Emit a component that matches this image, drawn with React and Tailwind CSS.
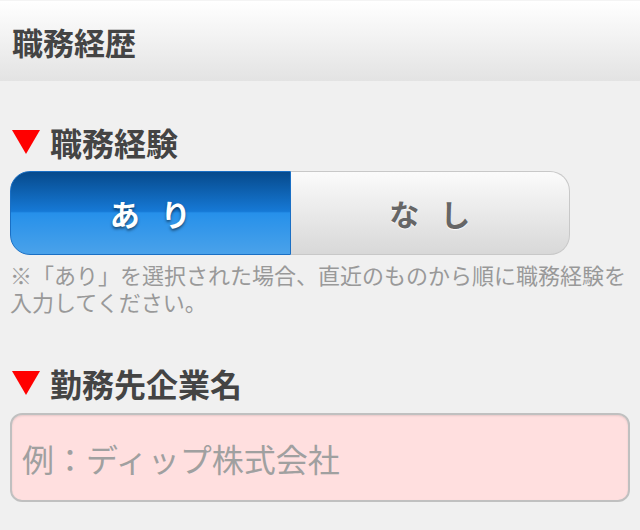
export default function App() {
  const jp = { fontFamily: '"Noto Sans CJK JP", "Noto Sans", sans-serif' };
  const Tri = () => (
    <svg width="28" height="24" viewBox="0 0 28 24" className="shrink-0">
      <polygon points="0,0 28,0 14,24" fill="#ff0000" />
    </svg>
  );
  return (
    <div className="w-[640px] h-[530px] overflow-hidden bg-[#f0f0f0]" style={jp}>
      <header className="h-[81px] border-t border-[#f4f4f4] bg-gradient-to-b from-[#ffffff] to-[#e3e3e3] flex items-center px-[12px]">
        <h1 className="text-[31px] font-bold text-[#444444] leading-none">職務経歴</h1>
      </header>

      <section className="px-[10px] pt-[45px]">
        <h2 className="flex items-center gap-[10px] h-[32px] text-[32px] font-bold text-[#444444] leading-none pl-[2px]">
          <Tri />
          職務経験
        </h2>

        <div className="mt-[13px] flex w-[560px] h-[84px]">
          <button className="flex-1 rounded-l-[20px] border border-[#1a6fc4] bg-[linear-gradient(to_bottom,#064a8c_0%,#1679d6_48%,#2690ea_50%,#4aa2ea_100%)] text-white text-[30px] font-bold tracking-[0.7em] pl-[0.7em] [text-shadow:0_2px_3px_rgba(0,0,0,0.5)]">
            あり
          </button>
          <button className="flex-1 rounded-r-[20px] border border-l-0 border-[#c8c8c8] bg-gradient-to-b from-[#fbfbfb] to-[#d8d8d8] text-[#666666] text-[30px] font-bold tracking-[0.7em] pl-[0.7em] [text-shadow:0_1px_1px_rgba(255,255,255,0.9)]">
            なし
          </button>
        </div>

        <p className="mt-[6px] text-[22px] leading-[27px] text-[#999999]">
          ※「あり」を選択された場合、直近のものから順に職務経験を入力してください。
        </p>
      </section>

      <section className="px-[10px] pt-[52px]">
        <h2 className="flex items-center gap-[10px] h-[32px] text-[32px] font-bold text-[#444444] leading-none pl-[2px]">
          <Tri />
          勤務先企業名
        </h2>
        <input
          className="mt-[14px] w-[620px] h-[89px] rounded-[12px] border-2 border-[#c0c0c0] bg-[#ffdfdf] px-[10px] text-[32px] text-[#444444] placeholder:text-[#a0a0a0] shadow-[inset_0_1px_2px_rgba(0,0,0,0.1)] outline-none"
          placeholder="例：ディップ株式会社"
        />
      </section>
    </div>
  );
}
